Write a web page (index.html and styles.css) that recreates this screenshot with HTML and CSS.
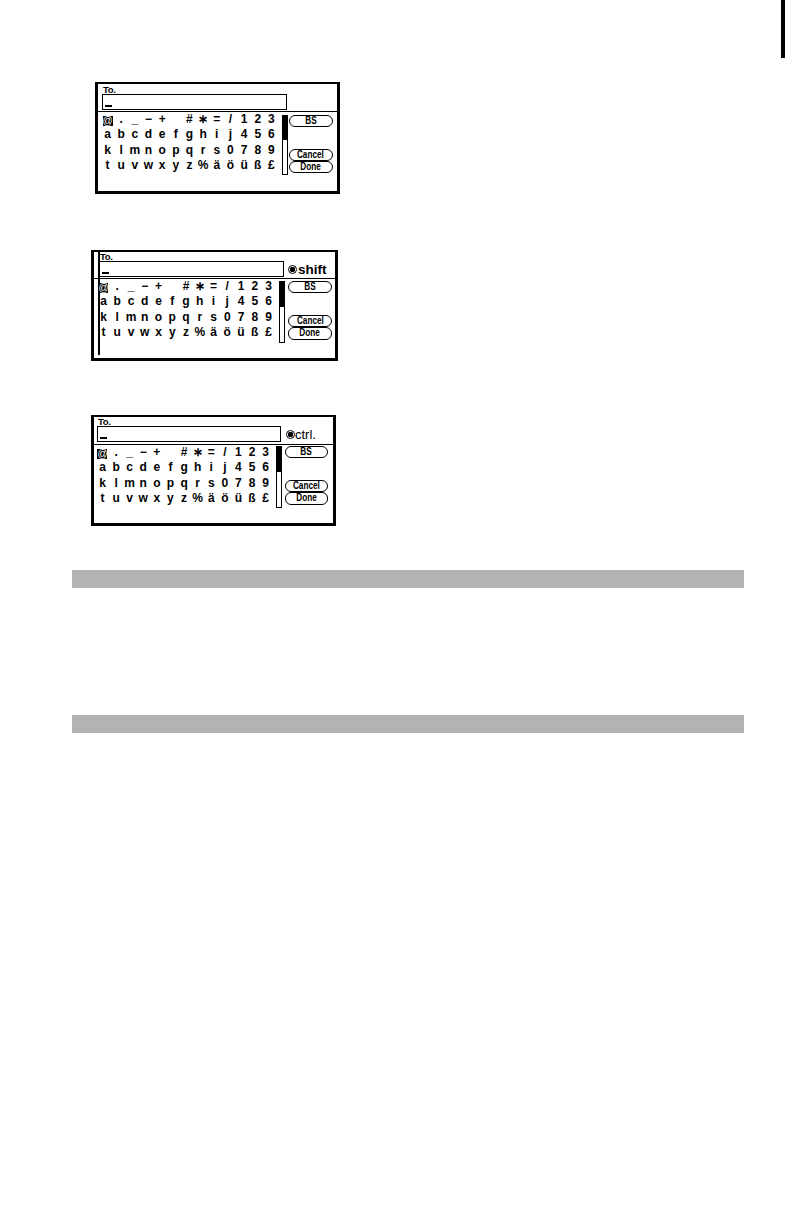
FILE: index.html
```html
<!DOCTYPE html>
<html>
<head>
<meta charset="utf-8">
<link rel="stylesheet" href="styles.css">
</head>
<body>
<div class="page">
  <div class="tab-row"><div class="tab"></div></div>

  <div class="panel p1">
    <div class="head">
      <div class="field">
        <div class="label">To.</div>
        <div class="input"><span class="cursor"></span></div>
      </div>
    </div>
    <div class="divider"></div>
    <div class="body">
      <div class="keys">
        <span><b class="hl">@</b></span><span>.</span><span>_</span><span>−</span><span>+</span><span></span><span>#</span><span>∗</span><span>=</span><span>/</span><span>1</span><span>2</span><span>3</span>
        <span>a</span><span>b</span><span>c</span><span>d</span><span>e</span><span>f</span><span>g</span><span>h</span><span>i</span><span>j</span><span>4</span><span>5</span><span>6</span>
        <span>k</span><span>l</span><span>m</span><span>n</span><span>o</span><span>p</span><span>q</span><span>r</span><span>s</span><span>0</span><span>7</span><span>8</span><span>9</span>
        <span>t</span><span>u</span><span>v</span><span>w</span><span>x</span><span>y</span><span>z</span><span>%</span><span>ä</span><span>ö</span><span>ü</span><span>ß</span><span>£</span>
      </div>
      <div class="scroll"><div class="thumb"></div></div>
      <div class="btns">
        <div class="btn bs"><span>BS</span></div>
        <div class="btn"><span>Cancel</span></div>
        <div class="btn"><span>Done</span></div>
      </div>
    </div>
  </div>

  <div class="panel p2">
    <div class="head">
      <div class="field">
        <div class="label">To.</div>
        <div class="input"><span class="cursor"></span></div>
      </div>
      <div class="mode"><span class="radio"></span><span class="mode-text shift">shift</span></div>
    </div>
    <div class="divider"></div>
    <div class="body">
      <div class="keys">
        <span><b class="hl">@</b></span><span>.</span><span>_</span><span>−</span><span>+</span><span></span><span>#</span><span>∗</span><span>=</span><span>/</span><span>1</span><span>2</span><span>3</span>
        <span>a</span><span>b</span><span>c</span><span>d</span><span>e</span><span>f</span><span>g</span><span>h</span><span>i</span><span>j</span><span>4</span><span>5</span><span>6</span>
        <span>k</span><span>l</span><span>m</span><span>n</span><span>o</span><span>p</span><span>q</span><span>r</span><span>s</span><span>0</span><span>7</span><span>8</span><span>9</span>
        <span>t</span><span>u</span><span>v</span><span>w</span><span>x</span><span>y</span><span>z</span><span>%</span><span>ä</span><span>ö</span><span>ü</span><span>ß</span><span>£</span>
      </div>
      <div class="scroll"><div class="thumb"></div></div>
      <div class="btns">
        <div class="btn bs"><span>BS</span></div>
        <div class="btn"><span>Cancel</span></div>
        <div class="btn"><span>Done</span></div>
      </div>
    </div>
  </div>

  <div class="panel p3">
    <div class="head">
      <div class="field">
        <div class="label">To.</div>
        <div class="input"><span class="cursor"></span></div>
      </div>
      <div class="mode"><span class="radio"></span><span class="mode-text ctrl">ctrl.</span></div>
    </div>
    <div class="divider"></div>
    <div class="body">
      <div class="keys">
        <span><b class="hl">@</b></span><span>.</span><span>_</span><span>−</span><span>+</span><span></span><span>#</span><span>∗</span><span>=</span><span>/</span><span>1</span><span>2</span><span>3</span>
        <span>a</span><span>b</span><span>c</span><span>d</span><span>e</span><span>f</span><span>g</span><span>h</span><span>i</span><span>j</span><span>4</span><span>5</span><span>6</span>
        <span>k</span><span>l</span><span>m</span><span>n</span><span>o</span><span>p</span><span>q</span><span>r</span><span>s</span><span>0</span><span>7</span><span>8</span><span>9</span>
        <span>t</span><span>u</span><span>v</span><span>w</span><span>x</span><span>y</span><span>z</span><span>%</span><span>ä</span><span>ö</span><span>ü</span><span>ß</span><span>£</span>
      </div>
      <div class="scroll"><div class="thumb"></div></div>
      <div class="btns">
        <div class="btn bs"><span>BS</span></div>
        <div class="btn"><span>Cancel</span></div>
        <div class="btn"><span>Done</span></div>
      </div>
    </div>
  </div>

  <div class="bar bar1"></div>
  <div class="bar bar2"></div>
</div>
</body>
</html>
```

FILE: styles.css
```css
html, body {
  margin: 0;
  padding: 0;
  background: #fff;
}
body {
  font-family: "Liberation Sans", Arial, sans-serif;
  color: #000;
}
.page {
  width: 792px;
  height: 1224px;
  overflow: hidden;
}
.tab-row {
  height: 58px;
  display: flex;
  justify-content: flex-end;
  padding-right: 7px;
}
.tab {
  width: 4px;
  background: #000;
}

/* ---------- keyboard panel ---------- */
.panel {
  box-sizing: border-box;
  border-style: solid;
  border-color: #000;
  border-width: 2px 3px 3px 3px;
  display: flex;
  flex-direction: column;
  background: #fff;
}
.head {
  display: flex;
  align-items: flex-end;
}
.field {
  display: flex;
  flex-direction: column;
}
.label {
  height: 9px;
  line-height: 10px;
  font-size: 9.5px;
  font-weight: bold;
  padding-left: 1px;
  letter-spacing: -0.3px;
}
.input {
  box-sizing: border-box;
  height: 16px;
  border: 1px solid #000;
  display: flex;
  align-items: flex-end;
  padding: 0 0 2px 2px;
}
.cursor {
  width: 7px;
  height: 2px;
  background: #000;
}
.divider {
  height: 1px;
  background: #000;
}
.body {
  display: flex;
  align-items: flex-start;
}
.keys {
  display: grid;
  grid-auto-rows: 15.4px;
  font-size: 12px;
  font-weight: bold;
  text-align: center;
  line-height: 15.4px;
}
.hl {
  display: inline-block;
  width: 10px;
  height: 10px;
  line-height: 10px;
  background: #000;
  color: #fff;
  font-size: 10px;
  font-weight: normal;
  vertical-align: -1px;
}
.scroll {
  box-sizing: border-box;
  width: 6px;
  border: 1px solid #000;
}
.thumb {
  height: 24px;
  background: #000;
}
.btns {
  display: flex;
  flex-direction: column;
}
.btn {
  box-sizing: border-box;
  height: 12px;
  border: 1px solid #000;
  border-radius: 6px;
  font-size: 10px;
  font-weight: bold;
  line-height: 10px;
  text-align: center;
  white-space: nowrap;
}
.btn span {
  display: inline-block;
  transform: scaleX(0.82);
}
.btn.bs {
  margin-bottom: 22px;
}
.mode {
  display: flex;
  align-items: center;
  height: 16px;
}
.radio {
  box-sizing: border-box;
  width: 9px;
  height: 9px;
  border-radius: 50%;
  border: 1px solid #000;
  background: radial-gradient(circle, #000 0 2.6px, #fff 3px);
}
.shift {
  font-size: 13.5px;
  font-weight: bold;
  margin-left: 1px;
}
.ctrl {
  font-size: 13px;
  margin-left: 0;
}

/* panel 1 */
.p1 {
  width: 245px;
  height: 112px;
  margin-top: 24px;
  margin-left: 95px;
}
.p1 .head { padding: 1px 0 1px 4px; }
.p1 .input { width: 185px; }
.p1 .keys { grid-template-columns: repeat(13, 13.67px); margin-left: 2.7px; }
.p1 .scroll { margin: 3px 0 0 3.6px; height: 60px; }
.p1 .btns { margin: 3px 0 0 1px; width: 44px; }

/* panel 2 */
.p2 {
  width: 247px;
  height: 111px;
  margin-top: 56px;
  margin-left: 91px;
  background: linear-gradient(#000, #000) 3.5px 0 / 2px calc(100% - 3px) no-repeat, #fff;
}
.p2 .head { padding: 0 0 1px 5px; }
.p2 .input { width: 185px; }
.p2 .mode { margin-left: 4px; }
.p2 .keys { grid-template-columns: repeat(13, 13.75px); margin-left: 2.6px; }
.p2 .scroll { margin: 2px 0 0 3.6px; height: 62px; }
.p2 .thumb { height: 25px; }
.p2 .btns { margin: 2px 0 0 3px; width: 44px; }
.p2 .btn:last-child { height: 13px; }

/* panel 3 */
.p3 {
  width: 245px;
  height: 111px;
  margin-top: 54px;
  margin-left: 91px;
}
.p3 .head { padding: 0 0 2px 3px; }
.p3 .input { width: 184px; }
.p3 .mode { margin-left: 5px; }
.p3 .keys { grid-template-columns: repeat(13, 13.6px); margin-left: 1.7px; }
.p3 .scroll { margin: 1px 0 0 3.5px; height: 62px; }
.p3 .thumb { height: 25px; }
.p3 .btns { margin: 1px 0 0 3px; width: 43px; }
.p3 .btn:last-child { height: 13px; }

/* section bars */
.bar {
  height: 18px;
  width: 672px;
  margin-left: 72px;
  background: #b3b3b3;
}
.bar1 { margin-top: 44px; }
.bar2 { margin-top: 127px; }
```
